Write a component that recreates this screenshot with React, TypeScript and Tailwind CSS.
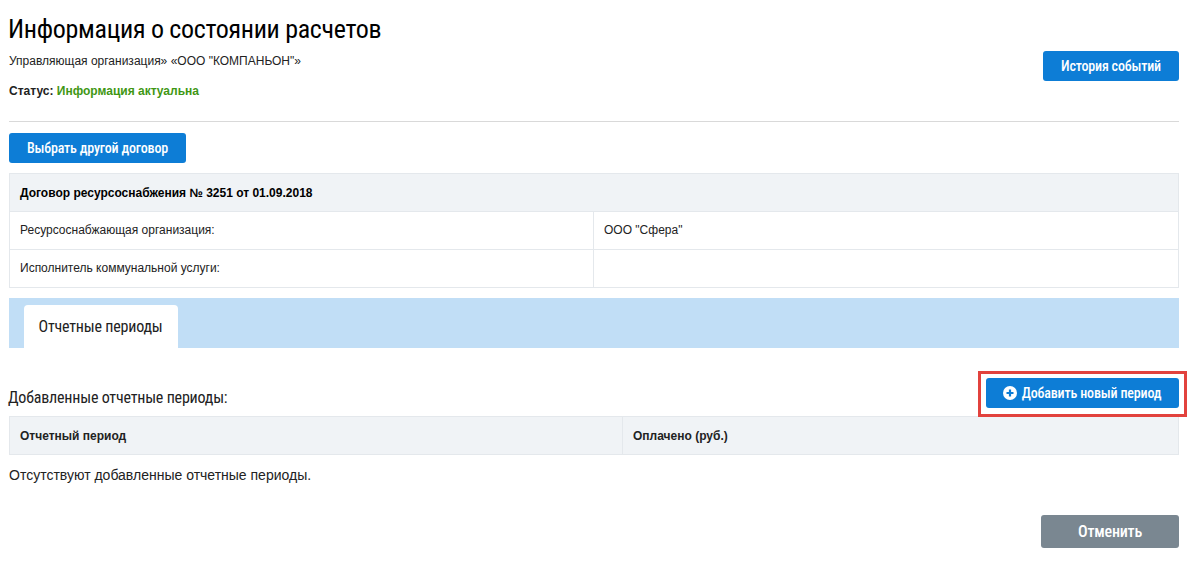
const condensed = "font-['Roboto'] [font-stretch:75%] tracking-[-0.2px]";
const blueBtn = "h-[30px] rounded-[3px] bg-[#0d7dd6] text-white text-[14px] font-medium font-['Roboto'] [font-stretch:75%] tracking-[-0.17px]";

function PlusIcon() {
  return (
    <svg width="14" height="14" viewBox="0 0 14 14" className="shrink-0">
      <circle cx="7" cy="7" r="7" fill="#fff" />
      <path d="M7 3.5v7M3.5 7h7" stroke="#0d7dd6" strokeWidth="2.2" />
    </svg>
  );
}

export default function App() {
  return (
    <div className="h-[569px] overflow-hidden bg-white pl-[9px] pr-[8px] text-black font-['Liberation_Sans',Arial,sans-serif]">
      <div className="flex justify-between border-b border-[#d9d9d9] h-[122px]">
        <div>
          <h1 className="pt-[13px] text-[26px] leading-[32px] font-normal font-['Roboto'] [font-stretch:75%] tracking-[-0.3px] -ml-[1px]">
            Информация о состоянии расчетов
          </h1>
          <p className="mt-[8px] text-[12px] leading-[16px] text-[#222]">Управляющая организация» «ООО "КОМПАНЬОН"»</p>
          <p className="mt-[14px] text-[12px] leading-[16px] font-bold text-[#222]">
            Статус: <span className="text-[#3f9714]">Информация актуальна</span>
          </p>
        </div>
        <button className={`${blueBtn} mt-[51px] w-[136px]`}>История событий</button>
      </div>

      <button className={`${blueBtn} mt-[11px] block w-[177px]`}>Выбрать другой договор</button>

      <div className="mt-[10px] border border-[#e4e8ec] text-[12px] text-[#222]">
        <div className="h-[37px] flex items-center px-[10px] bg-[#f0f3f6] font-bold text-black">
          Договор ресурсоснабжения № 3251 от 01.09.2018
        </div>
        <div className="h-[38px] flex border-t border-[#e4e8ec] pb-[2px]">
          <div className="w-[584px] flex items-center px-[10px] border-r border-[#e4e8ec] -mb-[2px] pb-[2px]">Ресурсоснабжающая организация:</div>
          <div className="flex-1 flex items-center px-[10px]">ООО "Сфера"</div>
        </div>
        <div className="h-[38px] flex border-t border-[#e4e8ec] pb-[2px]">
          <div className="w-[584px] flex items-center px-[10px] border-r border-[#e4e8ec] -mb-[2px] pb-[2px]">Исполнитель коммунальной услуги:</div>
          <div className="flex-1" />
        </div>
      </div>

      <div className="mt-[10px] h-[50px] bg-[#c1def6] pl-[15px] pt-[7px]">
        <div className={`h-[43px] w-[154px] rounded-t-[4px] bg-white flex items-center justify-center pr-[1px] text-[16px] text-[#222] ${condensed}`}>
          Отчетные периоды
        </div>
      </div>

      <div className="relative mt-[30px] h-[38px] flex items-end justify-between">
        <span className={`text-[16px] leading-[20px] pb-[8px] -ml-[1px] text-[#222] ${condensed}`}>Добавленные отчетные периоды:</span>
        <button className={`${blueBtn} w-[193px] mb-[8px] flex items-center justify-center gap-[5px] pr-[1px]`}>
          <PlusIcon />
          Добавить новый период
        </button>
        <div className="absolute right-[-8px] top-[-7px] h-[46px] w-[209px] border-[3px] border-[#e2423d]" />
      </div>

      <div className="flex h-[39px] border border-[#e4e8ec] bg-[#f0f3f6] text-[12px] font-bold text-[#222]">
        <div className="w-[613px] flex items-center px-[10px] border-r border-[#e4e8ec]">Отчетный период</div>
        <div className="flex-1 flex items-center px-[10px]">Оплачено (руб.)</div>
      </div>

      <p className="mt-[11px] text-[14px] leading-[18px] text-[#222]">Отсутствуют добавленные отчетные периоды.</p>

      <div className="mt-[31px] flex justify-end">
        <button className={`h-[33px] w-[138px] rounded-[3px] bg-[#7a8791] text-white text-[16px] font-medium ${condensed}`}>Отменить</button>
      </div>
    </div>
  );
}
